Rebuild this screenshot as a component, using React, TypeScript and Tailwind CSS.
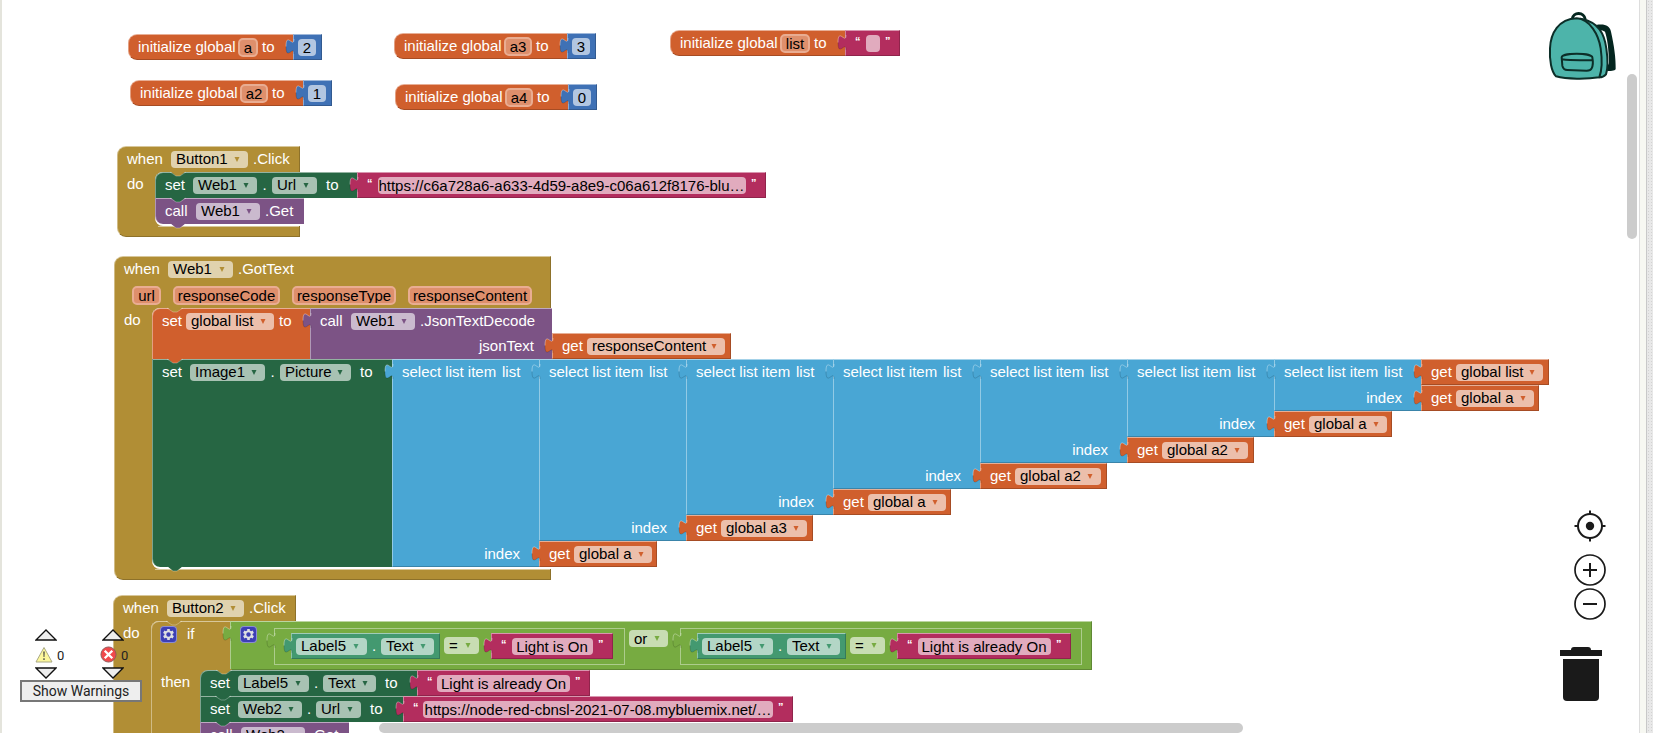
import React, { ReactNode } from "react";

const GOLD = "bg-[#b18e35]";
const ORANGE = "bg-[#d05f2d]";
const BLUE = "bg-[#3f71b5]";
const PINK = "bg-[#b32d5e]";
const GREEN = "bg-[#266643]";
const PURPLE = "bg-[#7c5385]";
const SKY = "bg-[#49a6d4]";
const LIME = "bg-[#77ab41]";
const TEAL = "bg-[#439970]";

const FILL: Record<string, string> = {
  [GOLD]: "#b18e35",
  [ORANGE]: "#d05f2d",
  [BLUE]: "#3f71b5",
  [PINK]: "#b32d5e",
  [GREEN]: "#266643",
  [PURPLE]: "#7c5385",
  [SKY]: "#49a6d4",
  [LIME]: "#77ab41",
  [TEAL]: "#439970",
};

const EDGE = "border-t border-l border-t-white/50 border-l-white/40";
const EDGE_END = "border-b border-r border-b-black/20 border-r-black/20";

function Notch({ color }: { color: string }) {
  return (
    <svg className="pointer-events-none absolute left-[15px] top-full z-10 -mt-px" width="16" height="6" viewBox="0 0 16 6" aria-hidden="true">
      <path d="M0 0L6 5H10L16 0Z" fill={FILL[color]} />
      <path d="M0 1L6 5H10L16 1" fill="none" stroke="#fff" strokeOpacity="0.3" />
    </svg>
  );
}

function Plug({ color }: { color: string }) {
  return (
    <svg className="pointer-events-none absolute -left-[9px] -top-px z-10" width="10" height="26" viewBox="0 0 10 26" aria-hidden="true">
      <path d="M9 5C9 15 1 -3 1 12.5C1 28 9 10 9 20H10V5Z" fill={FILL[color]} />
      <path d="M9 5C9 15 1 -3 1 12.5" fill="none" stroke="#fff" strokeOpacity="0.35" />
      <path d="M1 12.5C1 28 9 10 9 20" fill="none" stroke="#000" strokeOpacity="0.15" />
    </svg>
  );
}

function Value({ color, className = "", children }: { color: string; className?: string; children: ReactNode }) {
  return (
    <div className={`relative flex h-[26px] shrink-0 pt-1 ${color} ${EDGE} ${EDGE_END} ${className}`}>
      <Plug color={color} />
      {children}
    </div>
  );
}

function Label({ w = "", children }: { w?: string; children: ReactNode }) {
  return <span className={`shrink-0 whitespace-pre text-white ${w}`}>{children}</span>;
}

function Drop({ w, value, color }: { w: string; value: string; color: string }) {
  return (
    <span className={`relative block h-[17px] shrink-0 rounded bg-white/60 ${w}`}>
      <select aria-label={value} className="-mt-px block h-[18px] w-full appearance-none bg-transparent pb-px pl-[5px] leading-[17px] text-black outline-none">
        <option>{value}</option>
      </select>
      <svg className="pointer-events-none absolute right-2 top-[6px]" width="6" height="5" viewBox="0 0 6 5" aria-hidden="true">
        <path d="M0.5 0H5.5L3 5Z" fill={FILL[color]} />
      </svg>
    </span>
  );
}

function Field({ w, value, label }: { w: string; value: string; label: string }) {
  return (
    <input
      aria-label={label}
      defaultValue={value}
      className={`block h-[17px] shrink-0 rounded bg-white/60 pb-px text-center leading-[16px] text-black outline-none ${w}`}
    />
  );
}

function NameField({ w, value }: { w: string; value: string }) {
  return (
    <input
      aria-label={`name ${value}`}
      defaultValue={value}
      className={`-my-px block h-[19px] shrink-0 rounded-[5px] border-2 border-[#e9ad92] bg-[#de8f6c] pb-px text-center leading-[15px] text-black outline-none ${w}`}
    />
  );
}

function Text({ w, field, value }: { w: string; field: string; value: string }) {
  return (
    <Value color={PINK} className={`justify-between px-[9px] ${w}`}>
      <span className="w-[5px] text-[11px] font-bold leading-[13px] text-white">“</span>
      <Field w={field} value={value} label="text" />
      <span className="w-[5px] text-[11px] font-bold leading-[13px] text-white">”</span>
    </Value>
  );
}

function Get({ w, field, value }: { w: string; field: string; value: string }) {
  return (
    <Value color={ORANGE} className={`pl-[9px] ${w}`}>
      <Label w="w-[25px]">get</Label>
      <Drop w={field} value={value} color={ORANGE} />
    </Value>
  );
}

function Init({ place, name, field, children }: { place: string; name: string; field: string; children: ReactNode }) {
  return (
    <div className={`absolute flex ${place}`}>
      <div className={`flex h-[26px] rounded-l-[9px] pl-[9px] pr-[19px] pt-1 ${ORANGE} ${EDGE} border-b border-b-black/20`}>
        <Label w="w-[100px]">initialize global</Label>
        <NameField w={field} value={name} />
        <Label w="ml-1 w-3">to</Label>
      </div>
      {children}
    </div>
  );
}

function NumberBlock({ value }: { value: string }) {
  return (
    <Value color={BLUE} className="w-[29px] pl-1">
      <Field w="w-[18px]" value={value} label="number" />
    </Value>
  );
}

function Statement({ color, w = "", first, last, children, input }: { color: string; w?: string; first?: boolean; last?: boolean; children: ReactNode; input?: ReactNode }) {
  return (
    <div className="relative flex">
      <div
        className={`flex min-h-[26px] shrink-0 items-start pl-[9px] pt-1 ${color} ${EDGE} ${first ? "rounded-tl-[8px]" : ""} ${last ? "rounded-bl-[8px]" : ""} ${w}`}
      >
        {children}
      </div>
      {input}
      <Notch color={color} />
    </div>
  );
}

function EventBlock({ place, w, header, params, children }: { place: string; w: string; header: ReactNode; params?: ReactNode; children: ReactNode }) {
  return (
    <section className={`absolute ${place}`}>
      <div className={`relative rounded-tl-[9px] ${GOLD} ${EDGE} border-r border-r-black/20 ${w}`}>
        <div className="flex h-[25px] pl-[9px] pt-1">{header}</div>
        {params}
        <span className="absolute left-[37px] top-full">
          <Notch color={GOLD} />
        </span>
      </div>
      <div className="flex w-max bg-[linear-gradient(#b18e35,#b18e35)] bg-[length:48px_100%] bg-no-repeat">
        <div className="w-[38px] shrink-0 border-l border-l-white/40 pl-[9px] pt-[4px]">
          <Label>do</Label>
        </div>
        <div className="rounded-l-[8px] bg-white pb-[2px]">{children}</div>
      </div>
      <div className={`flex h-[11px] rounded-bl-[9px] border-b border-l border-r border-b-black/20 border-l-white/40 border-r-black/20 ${GOLD} ${w}`}>
        <span className="ml-[40px] h-px grow bg-white/50" />
      </div>
    </section>
  );
}

function SelectItem({ list, index }: { list: ReactNode; index: ReactNode }) {
  return (
    <div className="flex">
      <div className={`relative flex w-[147px] shrink-0 flex-col justify-between ${SKY} ${EDGE} border-b border-b-black/20`}>
        <Plug color={SKY} />
        <div className="flex pl-[9px] pt-1">
          <Label w="w-[100px]">select list item</Label>
          <Label>list</Label>
        </div>
        <div className="flex justify-end pb-[5px] pr-[19px]">
          <Label>index</Label>
        </div>
      </div>
      <div className="flex flex-col items-start">
        {list}
        {index}
      </div>
    </div>
  );
}

function Gear({ label }: { label: string }) {
  return (
    <button type="button" aria-label={label} className="flex size-[17px] shrink-0 items-center justify-center rounded-[4px] border border-white/40 bg-[#3d3fb5]">
      <svg width="13" height="13" viewBox="-6.5 -6.5 13 13" aria-hidden="true">
        <g fill="#dfe0e2">
          <rect x="-1.3" y="-5.5" width="2.6" height="11" />
          <rect x="-1.3" y="-5.5" width="2.6" height="11" transform="rotate(60)" />
          <rect x="-1.3" y="-5.5" width="2.6" height="11" transform="rotate(120)" />
          <circle r="4" />
        </g>
        <circle r="2.2" fill="#3d3fb5" />
      </svg>
    </button>
  );
}

function Compare({ w, text, field, value }: { w: string; text: string; field: string; value: string }) {
  return (
    <div className={`relative mt-[6px] flex h-[37px] shrink-0 border border-white/40 pl-4 pt-[4px] ${w}`}>
      <Plug color={LIME} />
      <Value color={TEAL} className="w-[149px] pl-1">
        <Drop w="w-[71px]" value="Label5" color={TEAL} />
        <Label w="w-[14px] text-center">.</Label>
        <Drop w="w-[53px]" value="Text" color={TEAL} />
      </Value>
      <div className="ml-1 mr-3 mt-[5px]">
        <Drop w="w-[35px]" value="=" color={LIME} />
      </div>
      <Text w={text} field={field} value={value} />
    </div>
  );
}

function Arrow({ down }: { down?: boolean }) {
  return (
    <button type="button" aria-label={down ? "Next" : "Previous"} className="block">
      <svg width="22" height="12" viewBox="0 0 22 12" aria-hidden="true">
        <path d={down ? "M1 1H21L11 11Z" : "M1 11H21L11 1Z"} fill="#eee" stroke="#111" strokeWidth="1.3" />
      </svg>
    </button>
  );
}

function Indicators() {
  return (
    <div className="absolute bottom-[31px] left-[18px] z-20 font-['Roboto',sans-serif] text-[13px] text-[#222]">
      <div className="flex gap-[45px] pl-[15px]">
        <div className="flex w-[22px] flex-col gap-1">
          <Arrow />
          <span className="flex h-[18px] items-center gap-1">
            <svg className="shrink-0" width="18" height="17" viewBox="0 0 18 17" aria-hidden="true">
              <path d="M9 1.5L17 16H1Z" fill="#fcf79b" stroke="#aaa984" strokeLinejoin="round" />
              <path d="M8 5.5H10L9.6 11H8.4ZM8.1 12.3H9.9V14.1H8.1Z" fill="#77755a" />
            </svg>
            <span className="pt-[2px]">0</span>
          </span>
          <Arrow down />
        </div>
        <div className="flex w-[22px] flex-col gap-1">
          <Arrow />
          <span className="-ml-[2px] flex h-[18px] items-center gap-1">
            <svg className="shrink-0" width="17" height="17" viewBox="0 0 18 18" aria-hidden="true">
              <circle cx="9" cy="9" r="8" fill="#f0494c" stroke="#8c5a5a" />
              <path d="M5 5L13 13M13 5L5 13" stroke="#fff" strokeWidth="2.5" />
            </svg>
            <span className="pt-[2px]">0</span>
          </span>
          <Arrow down />
        </div>
      </div>
      <button type="button" className="mt-px block h-[22px] w-[122px] border-2 border-[#777] bg-[#eee] text-[14px] leading-[18px] text-[#222]">
        Show Warnings
      </button>
    </div>
  );
}

function Backpack() {
  return (
    <svg width="77" height="75" viewBox="0 0 231 225" aria-hidden="true">
      <path d="M168 60C195 56 209 62 213 80C222 120 228 160 227 192Q226 198 202 198L202 182Q208 180 207 172C206 130 202 100 195 80Q190 76 176 76Z" fill="#04261f" />
      <path d="M97 42C99 20 133 20 136 44" fill="none" stroke="#04261f" strokeWidth="9" />
      <path d="M125 42C175 52 193 85 199 130C204 165 204 190 198 208Q190 217 178 217Z" fill="#4db4aa" stroke="#0c2e28" strokeWidth="6" />
      <path d="M48 214C34 200 28 165 30 130C32 85 55 42 110 40C150 42 176 90 182 130C187 165 186 195 178 217C140 223 80 223 48 214Z" fill="#4db4aa" stroke="#0c2e28" strokeWidth="6" />
      <path d="M65 157C66 143 154 143 157 157Q161 178 155 190Q152 197 140 197L82 195Q70 195 67 182ZM65 163C90 166 130 166 157 165" fill="none" stroke="#0c2e28" strokeWidth="6" />
    </svg>
  );
}

export default function App() {
  return (
    <div className="flex h-screen w-full overflow-hidden bg-white font-['Liberation_Sans',Arial,sans-serif] text-[15px] leading-[15px]">
      <main className="relative min-w-0 grow overflow-hidden border-l-2 border-[#e4e4dc] bg-white">
        <Init place="left-[126px] top-[34px]" name="a" field="w-5">
          <NumberBlock value="2" />
        </Init>
        <Init place="left-[128px] top-[80px]" name="a2" field="w-7">
          <NumberBlock value="1" />
        </Init>
        <Init place="left-[392px] top-[33px]" name="a3" field="w-7">
          <NumberBlock value="3" />
        </Init>
        <Init place="left-[393px] top-[84px]" name="a4" field="w-7">
          <NumberBlock value="0" />
        </Init>
        <Init place="left-[668px] top-[30px]" name="list" field="w-[30px]">
          <Text w="w-[55px]" field="w-[14px]" value="" />
        </Init>

        <EventBlock
          place="left-[115px] top-[146px]"
          w="w-[183px]"
          header={
            <>
              <Label w="w-11">when</Label>
              <Drop w="w-[77px]" value="Button1" color={GOLD} />
              <Label w="ml-[5px]">.Click</Label>
            </>
          }
        >
          <Statement color={GREEN} w="w-[202px]" first input={<Text w="w-[409px]" field="w-[368px]" value="https://c6a728a6-a633-4d59-a8e9-c06a612f8176-blu…" />}>
            <Label w="w-7">set</Label>
            <Drop w="w-16" value="Web1" color={GREEN} />
            <Label w="w-[15px] text-center">.</Label>
            <Drop w="w-[45px]" value="Url" color={GREEN} />
            <Label w="ml-[9px]">to</Label>
          </Statement>
          <Statement color={PURPLE} w="w-[149px]" last>
            <Label w="w-[31px]">call</Label>
            <Drop w="w-16" value="Web1" color={PURPLE} />
            <Label w="ml-[5px]">.Get</Label>
          </Statement>
        </EventBlock>

        <EventBlock
          place="left-[112px] top-[256px]"
          w="w-[437px]"
          header={
            <>
              <Label w="w-11">when</Label>
              <Drop w="w-[65px]" value="Web1" color={GOLD} />
              <Label w="ml-[5px]">.GotText</Label>
            </>
          }
          params={
            <div className="flex h-[26px] gap-3 pl-[17px] pt-[5px]">
              <NameField w="w-[29px]" value="url" />
              <NameField w="w-[107px]" value="responseCode" />
              <NameField w="w-[104px]" value="responseType" />
              <NameField w="w-[124px]" value="responseContent" />
            </div>
          }
        >
          <Statement
            color={ORANGE}
            w="w-[158px]"
            first
            input={
              <div className="flex">
                <div className={`relative flex w-[242px] shrink-0 flex-col pl-[9px] pr-[18px] pt-1 ${PURPLE} ${EDGE}`}>
                  <Plug color={PURPLE} />
                  <div className="flex h-[25px]">
                    <Label w="w-[31px]">call</Label>
                    <Drop w="w-16" value="Web1" color={PURPLE} />
                    <Label w="ml-[5px]">.JsonTextDecode</Label>
                  </div>
                  <div className="flex justify-end">
                    <Label>jsonText</Label>
                  </div>
                </div>
                <div className="pt-[25px]">
                  <Get w="w-[179px]" field="w-[138px]" value="responseContent" />
                </div>
              </div>
            }
          >
            <Label w="w-[24px]">set</Label>
            <Drop w="w-[88px]" value="global list" color={ORANGE} />
            <Label w="ml-[5px]">to</Label>
          </Statement>
          <Statement
            color={GREEN}
            w="w-[240px]"
            last
            input={
              <SelectItem
                index={<Get w="w-[118px]" field="w-[78px]" value="global a" />}
                list={
                  <SelectItem
                    index={<Get w="w-[127px]" field="w-[86px]" value="global a3" />}
                    list={
                      <SelectItem
                        index={<Get w="w-[118px]" field="w-[78px]" value="global a" />}
                        list={
                          <SelectItem
                            index={<Get w="w-[127px]" field="w-[86px]" value="global a2" />}
                            list={
                              <SelectItem
                                index={<Get w="w-[127px]" field="w-[86px]" value="global a2" />}
                                list={
                                  <SelectItem
                                    index={<Get w="w-[118px]" field="w-[78px]" value="global a" />}
                                    list={
                                      <SelectItem
                                        index={<Get w="w-[118px]" field="w-[78px]" value="global a" />}
                                        list={<Get w="w-[128px]" field="w-[87px]" value="global list" />}
                                      />
                                    }
                                  />
                                }
                              />
                            }
                          />
                        }
                      />
                    }
                  />
                }
              />
            }
          >
            <Label w="w-7">set</Label>
            <Drop w="w-[75px]" value="Image1" color={GREEN} />
            <Label w="w-[15px] text-center">.</Label>
            <Drop w="w-[71px]" value="Picture" color={GREEN} />
            <Label w="ml-[9px]">to</Label>
          </Statement>
        </EventBlock>

        <EventBlock
          place="left-[111px] top-[595px]"
          w="w-[183px]"
          header={
            <>
              <Label w="w-11">when</Label>
              <Drop w="w-[77px]" value="Button2" color={GOLD} />
              <Label w="ml-[5px]">.Click</Label>
            </>
          }
        >
          <div className={`flex h-[49px] rounded-tl-[8px] ${GOLD}`}>
            <div className="relative flex w-[79px] shrink-0 rounded-tl-[8px] border-l border-t border-l-white/40 border-t-white/50 pl-2 pt-1">
              <Gear label="Edit branches" />
              <Label w="ml-[10px]">if</Label>
              <span className="absolute left-[49px] top-full">
                <Notch color={GOLD} />
              </span>
            </div>
            <div className={`relative flex shrink-0 pl-[9px] pr-[9px] ${LIME} ${EDGE} ${EDGE_END}`}>
              <Plug color={LIME} />
              <div className="mr-[17px] pt-1">
                <Gear label="Edit operands" />
              </div>
              <Compare w="w-[351px]" text="w-[122px]" field="w-[81px]" value="Light is On" />
              <div className="ml-[4px] mr-3 mt-[9px]">
                <Drop w="w-[39px]" value="or" color={LIME} />
              </div>
              <Compare w="w-[402px]" text="w-[174px]" field="w-[133px]" value="Light is already On" />
            </div>
          </div>
          <div className="flex">
            <div className={`w-[49px] shrink-0 border-l border-l-white/40 pl-[9px] pt-[4px] ${GOLD}`}>
              <Label>then</Label>
            </div>
            <div className="bg-[linear-gradient(#b18e35,#b18e35)] bg-[length:12px_100%] bg-no-repeat">
              <Statement color={GREEN} w="w-[217px]" first input={<Text w="w-[173px]" field="w-[133px]" value="Light is already On" />}>
                <Label w="w-7">set</Label>
                <Drop w="w-[71px]" value="Label5" color={GREEN} />
                <Label w="w-[14px] text-center">.</Label>
                <Drop w="w-[53px]" value="Text" color={GREEN} />
                <Label w="ml-[9px]">to</Label>
              </Statement>
              <Statement color={GREEN} w="w-[203px]" input={<Text w="w-[390px]" field="w-[350px]" value="https://node-red-cbnsl-2021-07-08.mybluemix.net/…" />}>
                <Label w="w-7">set</Label>
                <Drop w="w-16" value="Web2" color={GREEN} />
                <Label w="w-[14px] text-center">.</Label>
                <Drop w="w-[45px]" value="Url" color={GREEN} />
                <Label w="ml-[9px]">to</Label>
              </Statement>
              <Statement color={PURPLE} w="w-[149px]" last>
                <Label w="w-[31px]">call</Label>
                <Drop w="w-16" value="Web2" color={PURPLE} />
                <Label w="ml-[5px]">.Get</Label>
              </Statement>
            </div>
          </div>
        </EventBlock>

        <Indicators />

        <button type="button" aria-label="Backpack" className="absolute right-[22px] top-[5px]">
          <Backpack />
        </button>
        <div className="absolute bottom-[32px] right-[33px] flex w-[46px] flex-col items-end">
          <button type="button" aria-label="Center workspace" className="mb-3 block">
            <svg width="32" height="32" viewBox="0 0 32 32" fill="none" stroke="#1a1a1a" aria-hidden="true">
              <circle cx="16" cy="16" r="12" strokeWidth="2" />
              <circle cx="16" cy="16" r="4.2" fill="#1a1a1a" stroke="none" />
              <path d="M16 0.5V4M16 28V31.5M0.5 16H4M28 16H31.5" strokeWidth="2" />
            </svg>
          </button>
          <button type="button" aria-label="Zoom in" className="mb-[2px] block">
            <svg width="32" height="32" viewBox="0 0 32 32" fill="none" stroke="#1a1a1a" strokeWidth="2" aria-hidden="true">
              <circle cx="16" cy="16" r="15" strokeWidth="1.7" />
              <path d="M9 16H23M16 9V23" />
            </svg>
          </button>
          <button type="button" aria-label="Zoom out" className="block">
            <svg width="32" height="32" viewBox="0 0 32 32" fill="none" stroke="#1a1a1a" strokeWidth="2" aria-hidden="true">
              <circle cx="16" cy="16" r="15" strokeWidth="1.7" />
              <path d="M9 16H23" />
            </svg>
          </button>
          <button type="button" aria-label="Trash" className="mr-1 mt-[26px] block">
            <svg width="42" height="55" viewBox="0 0 42 55" fill="#1a1a1a" aria-hidden="true">
              <path d="M0 4H11Q11 1 14 1H28Q31 1 31 4H42V10H0Z" />
              <path d="M3 13H39V51Q39 55 35 55H7Q3 55 3 51Z" />
            </svg>
          </button>
        </div>

        <div className="absolute right-[2px] top-[74px] h-[165px] w-[10px] rounded-full bg-[#ccc]" />
        <div className="absolute bottom-0 left-[377px] right-[396px] h-[10px] rounded-full bg-[#ccc]" />
      </main>
      <div className="w-[7px] shrink-0 border-l border-[#ddd] bg-[#f7f8f2]" />
      <div className="w-[7px] shrink-0 border-l border-[#c8c8c8] bg-[#e8e8e8] bg-[radial-gradient(#d2d2d2_1px,transparent_1px)] bg-[length:3px_3px]" />
    </div>
  );
}
